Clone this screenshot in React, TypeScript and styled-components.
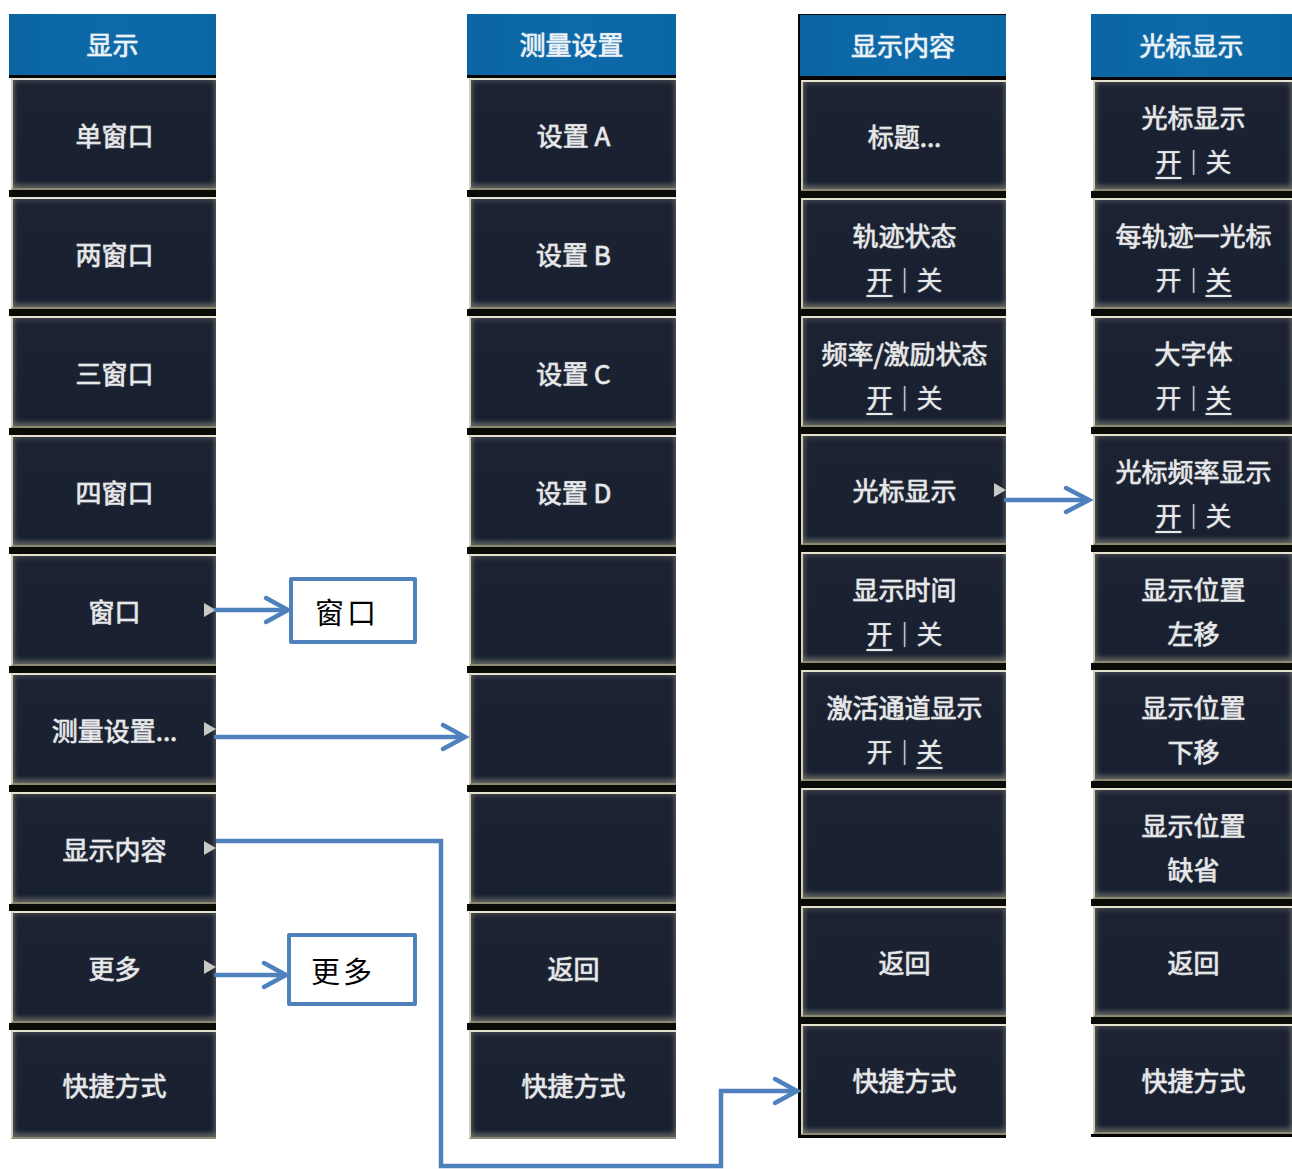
import React, { FC } from "react";
import styled, { createGlobalStyle } from "styled-components";

const BLUE = "#4f81bd";
const CJK = `"Noto Sans CJK SC", "Noto Sans", sans-serif`;

const GlobalStyle = createGlobalStyle`
	html, body {
		margin: 0;
		padding: 0;
		background: #ffffff;
	}
	body {
		font-family: ${CJK};
	}
`;

type Toggle = "on" | "off";

interface MenuItem {
	label?: string;
	sub?: boolean;
	toggle?: Toggle;
	second?: string;
}

interface MenuColumnData {
	title: string;
	offset: number;
	width: number;
	headerHeight: number;
	headerBorder: number;
	buttonHeight: number;
	lastHeight: number;
	framed?: boolean;
	closed?: boolean;
	items: MenuItem[];
}

const COLUMNS: MenuColumnData[] = [
	{
		title: "显示",
		offset: 0,
		width: 207,
		headerHeight: 64,
		headerBorder: 3,
		buttonHeight: 112,
		lastHeight: 109,
		items: [
			{ label: "单窗口" },
			{ label: "两窗口" },
			{ label: "三窗口" },
			{ label: "四窗口" },
			{ label: "窗口", sub: true },
			{ label: "测量设置...", sub: true },
			{ label: "显示内容", sub: true },
			{ label: "更多", sub: true },
			{ label: "快捷方式" },
		],
	},
	{
		title: "测量设置",
		offset: 251,
		width: 209,
		headerHeight: 64,
		headerBorder: 3,
		buttonHeight: 112,
		lastHeight: 109,
		items: [
			{ label: "设置 A" },
			{ label: "设置 B" },
			{ label: "设置 C" },
			{ label: "设置 D" },
			{},
			{},
			{},
			{ label: "返回" },
			{ label: "快捷方式" },
		],
	},
	{
		title: "显示内容",
		offset: 122,
		width: 208,
		headerHeight: 66,
		headerBorder: 4,
		buttonHeight: 111,
		lastHeight: 111,
		framed: true,
		closed: true,
		items: [
			{ label: "标题..." },
			{ label: "轨迹状态", toggle: "on" },
			{ label: "频率/激励状态", toggle: "on" },
			{ label: "光标显示", sub: true },
			{ label: "显示时间", toggle: "on" },
			{ label: "激活通道显示", toggle: "off" },
			{},
			{ label: "返回" },
			{ label: "快捷方式" },
		],
	},
	{
		title: "光标显示",
		offset: 85,
		width: 201,
		headerHeight: 66,
		headerBorder: 3,
		buttonHeight: 111,
		lastHeight: 110,
		closed: true,
		items: [
			{ label: "光标显示", toggle: "on" },
			{ label: "每轨迹一光标", toggle: "off" },
			{ label: "大字体", toggle: "off" },
			{ label: "光标频率显示", toggle: "on" },
			{ label: "显示位置", second: "左移" },
			{ label: "显示位置", second: "下移" },
			{ label: "显示位置", second: "缺省" },
			{ label: "返回" },
			{ label: "快捷方式" },
		],
	},
];

const ToggleLine: FC<{ value: Toggle }> = ({ value }) => (
	<ToggleRow>
		<ToggleWord $active={value === "on"}>开</ToggleWord>
		<Bar>|</Bar>
		<ToggleWord $active={value === "off"}>关</ToggleWord>
	</ToggleRow>
);

const MenuButtonView: FC<{ item: MenuItem; height: number }> = ({ item, height }) => {
	const twoLine = !!item.toggle || !!item.second;
	return (
		<MenuButton $height={height} $sub={!!item.sub}>
			{item.label && (
				<Label $twoLine={twoLine}>
					<span>{item.label}</span>
					{item.toggle && <ToggleLine value={item.toggle} />}
					{item.second && <span>{item.second}</span>}
				</Label>
			)}
		</MenuButton>
	);
};

const MenuColumnView: FC<{ data: MenuColumnData }> = ({ data }) => (
	<Column $offset={data.offset} $width={data.width} $framed={!!data.framed}>
		<Header $height={data.headerHeight} $border={data.headerBorder} $framed={!!data.framed}>
			{data.title}
		</Header>
		{data.items.map((item, i) => {
			const last = i === data.items.length - 1;
			return (
				<Slot key={i} $last={last} $closed={!!data.closed} $framed={!!data.framed}>
					<MenuButtonView item={item} height={last ? data.lastHeight : data.buttonHeight} />
				</Slot>
			);
		})}
	</Column>
);

const Connectors: FC = () => (
	<Overlay width="1292" height="1169" viewBox="0 0 1292 1169">
		<g fill="none" stroke={BLUE} strokeWidth="4.5" strokeLinecap="round" strokeLinejoin="miter">
			<path d="M216 610 H285" />
			<path d="M266 598 L288 610 L266 622" />
			<path d="M216 737 H462" />
			<path d="M443 725 L465 737 L443 749" />
			<path d="M216 841 H441 V1166 H721 V1091 H794" strokeLinecap="butt" />
			<path d="M775 1079 L797 1091 L775 1103" />
			<path d="M216 975 H283" />
			<path d="M264 963 L286 975 L264 987" />
			<path d="M1006 500 H1086" />
			<path d="M1066 488 L1089 500 L1066 512" />
		</g>
	</Overlay>
);

const App: FC = () => (
	<>
		<GlobalStyle />
		<Page>
			<Columns>
				{COLUMNS.map((c) => (
					<MenuColumnView key={c.title} data={c} />
				))}
			</Columns>
			<Connectors />
			<NoteBox $left={289} $top={577} $width={128} $height={67} $pad={22}>
				窗口
			</NoteBox>
			<NoteBox $left={287} $top={933} $width={130} $height={73} $pad={20}>
				更多
			</NoteBox>
		</Page>
	</>
);

const Page = styled.div`
	position: relative;
	width: 1292px;
	height: 1169px;
	overflow: hidden;
	background: #ffffff;
	padding: 14px 0 0 9px;
	box-sizing: border-box;
`;

const Columns = styled.div`
	display: flex;
	flex-direction: row;
	align-items: flex-start;
`;

const Column = styled.div<{ $offset: number; $width: number; $framed: boolean }>`
	display: flex;
	flex-direction: column;
	margin-left: ${(p) => p.$offset}px;
	width: ${(p) => p.$width}px;
	flex-shrink: 0;
	box-sizing: border-box;
	border-left: ${(p) => (p.$framed ? "2px solid #050505" : "none")};
`;

const Header = styled.div<{ $height: number; $border: number; $framed: boolean }>`
	height: ${(p) => p.$height}px;
	box-sizing: border-box;
	background: linear-gradient(90deg, #0b65a3 0%, #0d69a8 50%, #0b66a5 100%);
	border-top: ${(p) => (p.$framed ? "1px solid #050505" : "none")};
	border-bottom: ${(p) => p.$border}px solid #050505;
	display: flex;
	align-items: center;
	justify-content: center;
	color: #eef3f8;
	font-family: ${CJK};
	font-size: 26px;
	font-weight: 400;
	-webkit-text-stroke: 0.6px #eef3f8;
	padding-bottom: 2px;
	text-shadow: 0 0 2px rgba(255, 255, 255, 0.35);
`;

const Slot = styled.div<{ $last: boolean; $closed: boolean; $framed: boolean }>`
	padding-left: ${(p) => (p.$framed ? 1 : 2)}px;
	background: ${(p) => (p.$framed ? "#050505" : "transparent")};
	border-bottom: ${(p) =>
		p.$last ? (p.$closed ? "3px solid #050505" : "none") : "7px solid #0a0a07"};
`;

const MenuButton = styled.div<{ $height: number; $sub: boolean }>`
	position: relative;
	height: ${(p) => p.$height}px;
	box-sizing: border-box;
	background: linear-gradient(180deg, #1c2232 0%, #1a2131 55%, #172031 100%);
	border-top: 2px solid #e6e2d0;
	border-left: 2px solid #d2cdb8;
	border-bottom: 2px solid #8e8a72;
	box-shadow: inset 0 0 6px 1px rgba(205, 200, 175, 0.28), inset 0 -4px 5px rgba(160, 155, 130, 0.35);
	display: flex;
	align-items: center;
	justify-content: center;
	padding-top: 1px;

	&::after {
		content: "";
		display: ${(p) => (p.$sub ? "block" : "none")};
		position: absolute;
		right: 0;
		top: 50%;
		margin-top: -7px;
		border-style: solid;
		border-width: 7px 0 7px 12px;
		border-color: transparent transparent transparent #c8c8c4;
	}
`;

const Label = styled.div<{ $twoLine: boolean }>`
	display: flex;
	flex-direction: column;
	align-items: center;
	color: #e8e9ea;
	font-family: ${CJK};
	font-size: 26px;
	font-weight: 400;
	-webkit-text-stroke: 0.6px #e8e9ea;
	line-height: ${(p) => (p.$twoLine ? "44px" : "30px")};
	white-space: nowrap;
	text-shadow: 0 0 2px rgba(255, 255, 255, 0.3);
	padding-top: ${(p) => (p.$twoLine ? "5px" : "0")};
`;

const ToggleRow = styled.div`
	display: flex;
	align-items: center;
	gap: 8px;
	-webkit-text-stroke: 0.2px #e8e9ea;
`;

const ToggleWord = styled.span<{ $active: boolean }>`
	text-decoration: ${(p) => (p.$active ? "underline" : "none")};
	text-decoration-thickness: 2px;
	text-underline-offset: 5px;
`;

const Bar = styled.span`
	font-family: "DejaVu Sans", sans-serif;
	font-weight: 300;
	font-size: 24px;
	color: #d8dadc;
	-webkit-text-stroke: 0;
`;

const Overlay = styled.svg`
	position: absolute;
	left: 0;
	top: 0;
	pointer-events: none;
`;

const NoteBox = styled.div<{ $left: number; $top: number; $width: number; $height: number; $pad: number }>`
	position: absolute;
	left: ${(p) => p.$left}px;
	top: ${(p) => p.$top}px;
	width: ${(p) => p.$width}px;
	height: ${(p) => p.$height}px;
	box-sizing: border-box;
	border: 4px solid ${BLUE};
	border-radius: 2px;
	background: #ffffff;
	display: flex;
	align-items: center;
	padding-left: ${(p) => p.$pad}px;
	color: #000000;
	font-family: "Liberation Serif", "Noto Sans CJK SC", serif;
	font-size: 29px;
	letter-spacing: 3px;
	font-weight: 400;
`;

export default App;
